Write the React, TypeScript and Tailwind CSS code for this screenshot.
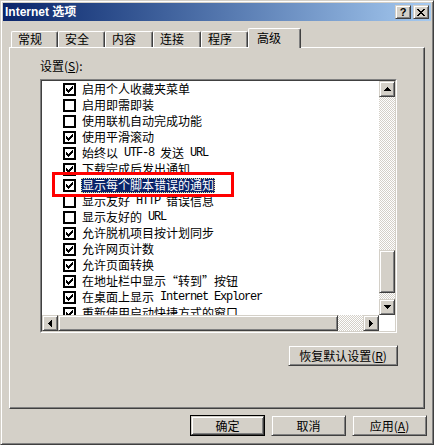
import React from "react";

const raised =
  "bg-[#d4d0c8] border border-t-[#d4d0c8] border-l-[#d4d0c8] border-r-[#404040] border-b-[#404040] shadow-[inset_1px_1px_0_#fff,inset_-1px_-1px_0_#808080]";

const checker =
  "bg-[repeating-conic-gradient(#ffffff_0_25%,#d4d0c8_0_50%)] bg-[length:2px_2px]";

type Item = { checked: boolean; text: string; selected?: boolean };

const items: Item[] = [
  { checked: true, text: "启用个人收藏夹菜单" },
  { checked: false, text: "启用即需即装" },
  { checked: false, text: "使用联机自动完成功能" },
  { checked: true, text: "使用平滑滚动" },
  { checked: true, text: "始终以 UTF-8 发送 URL" },
  { checked: true, text: "下载完成后发出通知" },
  { checked: true, text: "显示每个脚本错误的通知", selected: true },
  { checked: false, text: "显示友好 HTTP 错误信息" },
  { checked: false, text: "显示友好的 URL" },
  { checked: true, text: "允许脱机项目按计划同步" },
  { checked: true, text: "允许网页计数" },
  { checked: true, text: "允许页面转换" },
  { checked: true, text: "在地址栏中显示“转到”按钮" },
  { checked: true, text: "在桌面上显示 Internet Explorer" },
  { checked: true, text: "重新使用启动快捷方式的窗口" },
];

// latin runs are drawn narrow and monospaced, like the bitmap font; quotes take a full cell
function Mixed({ text }: { text: string }) {
  const parts = text.split(/([A-Za-z0-9\- ]+|“|”)/).filter(Boolean);
  return (
    <>
      {parts.map((p, i) => {
        if (p === "“")
          return (
            <span key={i} className="inline-block w-[12px] text-right">
              {p}
            </span>
          );
        if (p === "”")
          return (
            <span key={i} className="inline-block w-[12px] text-left">
              {p}
            </span>
          );
        if (/^[A-Za-z0-9\- ]+$/.test(p))
          return (
            <span
              key={i}
              className="font-['Liberation_Mono',monospace] text-[12px] tracking-[-1.2px] whitespace-pre"
            >
              {p}
            </span>
          );
        return <span key={i}>{p}</span>;
      })}
    </>
  );
}

function Arrow({ dir }: { dir: "up" | "down" | "left" | "right" }) {
  const vertical = dir === "up" || dir === "down";
  const d =
    dir === "up"
      ? "M3 0h1v1h-1z M2 1h3v1h-3z M1 2h5v1h-5z M0 3h7v1h-7z"
      : dir === "down"
      ? "M0 0h7v1h-7z M1 1h5v1h-5z M2 2h3v1h-3z M3 3h1v1h-1z"
      : dir === "left"
      ? "M3 0h1v7h-1z M2 1h1v5h-1z M1 2h1v3h-1z M0 3h1v1h-1z"
      : "M0 0h1v7h-1z M1 1h1v5h-1z M2 2h1v3h-1z M3 3h1v1h-1z";
  return (
    <svg
      width={vertical ? 7 : 4}
      height={vertical ? 4 : 7}
      viewBox={vertical ? "0 0 7 4" : "0 0 4 7"}
      shapeRendering="crispEdges"
    >
      <path d={d} fill="#000" />
    </svg>
  );
}

function ScrollBtn({ dir }: { dir: "up" | "down" | "left" | "right" }) {
  return (
    <div className={`${raised} w-[16px] h-[16px] flex items-center justify-center shrink-0`}>
      <Arrow dir={dir} />
    </div>
  );
}

function CheckBox({ checked }: { checked: boolean }) {
  return (
    <div className="w-[13px] h-[13px] border-2 border-[#000] bg-white shrink-0 flex items-center justify-center">
      {checked && (
        <svg width="7" height="7" viewBox="0 0 7 7" shapeRendering="crispEdges">
          <path
            d="M6 0h1v3h-1z M5 1h1v3h-1z M4 2h1v3h-1z M3 3h1v3h-1z M2 4h1v3h-1z M1 3h1v3h-1z M0 2h1v3h-1z"
            fill="#000"
          />
        </svg>
      )}
    </div>
  );
}

function Tab({ label, width }: { label: string; width: string }) {
  return (
    <div
      className={`${width} h-[16px] shrink-0 border-t border-l border-r border-t-white border-l-white border-r-[#404040] rounded-t-[2px] shadow-[inset_-1px_0_0_#808080] pl-[6px] pt-[1px]`}
    >
      {label}
    </div>
  );
}

function Button({ children, width, isDefault }: { children: React.ReactNode; width: string; isDefault?: boolean }) {
  if (isDefault) {
    return (
      <div className={`${width} h-[21px] border border-black`}>
        <div className={`${raised} w-full h-full flex items-center justify-center`}>{children}</div>
      </div>
    );
  }
  return <div className={`${raised} ${width} h-[21px] flex items-center justify-center`}>{children}</div>;
}

export default function App() {
  return (
    <div className="relative w-[434px] h-[445px] bg-[#d4d0c8] border border-t-[#d4d0c8] border-l-[#d4d0c8] border-r-[#404040] border-b-[#404040] shadow-[inset_1px_1px_0_#fff,inset_-1px_-1px_0_#808080] p-[2px] font-['Noto_Sans_CJK_SC',sans-serif] text-[12px] leading-none text-black select-none overflow-hidden">
      {/* title bar */}
      <div className="h-[18px] flex items-center bg-gradient-to-r from-[#0a246a] to-[#a6caf0] pl-[2px] pr-[2px]">
        <span className="text-white font-bold text-[12px] font-['Liberation_Sans','Noto_Sans_CJK_SC',sans-serif]">
          Internet 选项
        </span>
        <div className="ml-auto flex gap-[2px]">
          <div className={`${raised} w-[16px] h-[14px] flex items-center justify-center`}>
            <span className="font-['Liberation_Sans',sans-serif] font-bold text-[11px] leading-none">?</span>
          </div>
          <div className={`${raised} w-[16px] h-[14px] flex items-center justify-center`}>
            <svg width="8" height="7" viewBox="0 0 8 7" shapeRendering="crispEdges">
              <path
                d="M0 0h2v1h-2z M6 0h2v1h-2z M1 1h2v1h-2z M5 1h2v1h-2z M2 2h4v1h-4z M3 3h2v1h-2z M2 4h4v1h-4z M1 5h2v1h-2z M5 5h2v1h-2z M0 6h2v1h-2z M6 6h2v1h-2z"
                fill="#000"
              />
            </svg>
          </div>
        </div>
      </div>

      {/* tabs */}
      <div className="mt-[7px] ml-[6px] h-[19px] pl-[2px] flex items-end">
        <Tab label="常规" width="w-[47px]" />
        <Tab label="安全" width="w-[47px]" />
        <Tab label="内容" width="w-[48px]" />
        <Tab label="连接" width="w-[48px]" />
        <Tab label="程序" width="w-[47px]" />
        <div className="relative z-10 w-[53px] h-[20px] -mb-[1px] shrink-0 bg-[#d4d0c8] border-t border-l border-r border-t-white border-l-white border-r-[#404040] rounded-t-[2px] shadow-[inset_-1px_0_0_#808080] pl-[8px] pt-[3px]">
          高级
        </div>
      </div>

      {/* tab panel */}
      <div className="ml-[6px] w-[416px] h-[362px] border border-t-white border-l-white border-r-[#404040] border-b-[#404040] shadow-[inset_-1px_-1px_0_#808080] pl-[30px] pt-[12px]">
        <div className="h-[12px]">
          设置(<span className="underline">S</span>):
        </div>

        {/* list box */}
        <div className="mt-[7px] w-[357px] h-[254px] border border-t-[#808080] border-l-[#808080] border-r-white border-b-white bg-white">
          <div className="w-full h-full border border-t-[#404040] border-l-[#404040] border-r-[#d4d0c8] border-b-[#d4d0c8] grid grid-cols-[1fr_16px] grid-rows-[1fr_16px]">
            <div className="overflow-hidden pl-[21px]">
              {items.map((it, i) => (
                <div key={i} className="h-[16px] flex items-center whitespace-nowrap">
                  <CheckBox checked={it.checked} />
                  {it.selected ? (
                    <span className="ml-[5px] px-[1px] h-[15px] flex items-center bg-[#0a246a] text-white outline outline-1 outline-dotted outline-[#e8e4a0] -outline-offset-1">
                      <Mixed text={it.text} />
                    </span>
                  ) : (
                    <span className="ml-[6px] flex items-center">
                      <Mixed text={it.text} />
                    </span>
                  )}
                </div>
              ))}
            </div>

            {/* vertical scrollbar */}
            <div className="flex flex-col">
              <ScrollBtn dir="up" />
              <div className={`h-[153px] ${checker}`} />
              <div className={`${raised} h-[43px]`} />
              <div className={`flex-1 ${checker}`} />
              <ScrollBtn dir="down" />
            </div>

            {/* horizontal scrollbar */}
            <div className="flex">
              <ScrollBtn dir="left" />
              <div className={`${raised} w-[280px]`} />
              <div className={`flex-1 ${checker}`} />
              <ScrollBtn dir="right" />
            </div>
            <div className="bg-white" />
          </div>
        </div>

        <div className="mt-[12px] ml-[248px]">
          <Button width="w-[110px]">
            恢复默认设置(<span className="underline">R</span>)
          </Button>
        </div>
      </div>

      {/* dialog buttons */}
      <div className="mt-[6px] pr-[4px] flex justify-end gap-[6px]">
        <Button width="w-[75px]" isDefault>
          确定
        </Button>
        <Button width="w-[75px]">取消</Button>
        <Button width="w-[75px]">
          应用(<span className="underline">A</span>)
        </Button>
      </div>

      {/* red annotation box */}
      <div className="absolute left-[51px] top-[171px] w-[182px] h-[25px] border-[3px] border-[#ff0000]" />
    </div>
  );
}
